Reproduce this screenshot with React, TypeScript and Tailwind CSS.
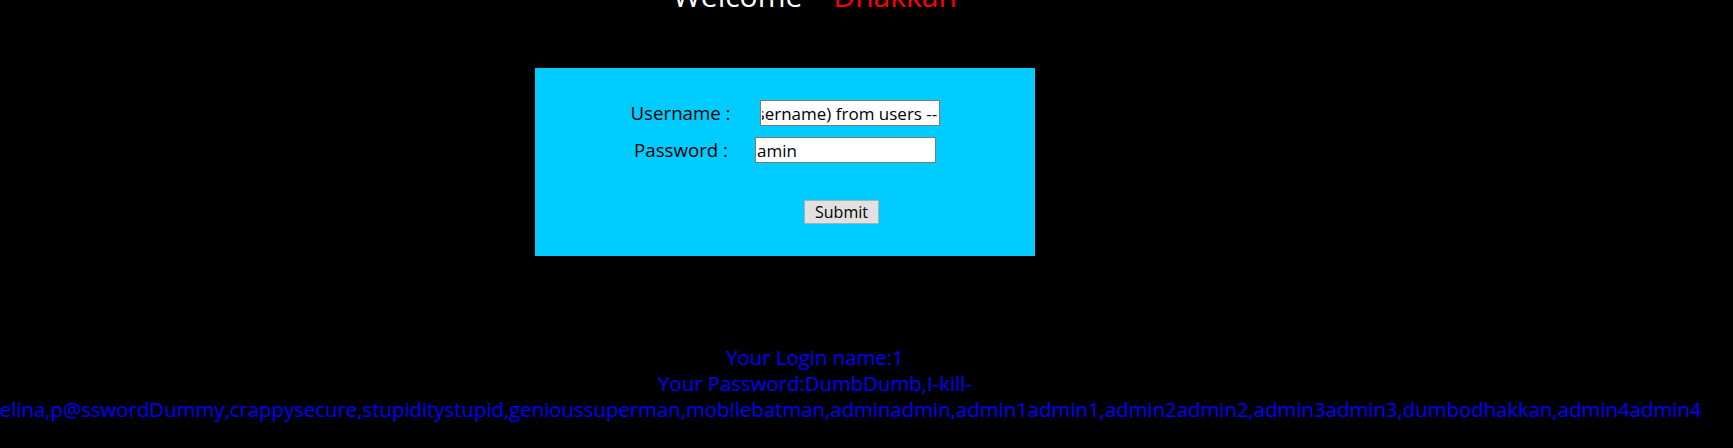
import React, { useEffect, useRef } from "react";

const FONT = { fontFamily: '"Open Sans", "Noto Sans", Arial, sans-serif' };

export default function App() {
  const unameRef = useRef<HTMLInputElement>(null);
  useEffect(() => {
    if (unameRef.current) unameRef.current.scrollLeft = unameRef.current.scrollWidth;
  }, []);
  return (
    <div className="min-h-[448px] w-full overflow-hidden bg-black" style={FONT}>
      <div className="w-[1630px]">
        <div className="-mt-[19px] h-[30px] text-center text-[30px] leading-[30px] text-white">
          Welcome&nbsp;&nbsp;&nbsp; <span className="text-[#ff0000]">Dhakkan</span>
        </div>
        <div className="ml-[535px] mt-[57px] h-[188px] w-[500px] bg-[#00ccff] pt-[31px]">
          <div className="flex items-center justify-center gap-[29px]">
            <span className="text-[18.7px] text-black">Username :</span>
            <input
              ref={unameRef}
              readOnly
              defaultValue="1' union select 1,group_concat(password,username) from users --"
              className="h-[26px] w-[180px] border border-[#7a7a7a] bg-white px-[1px] text-[17px] text-black outline-none"
            />
          </div>
          <div className="mt-[9px] flex items-center justify-center gap-[27px]">
            <span className="text-[18.7px] text-black">Password :</span>
            <input
              readOnly
              defaultValue="amin"
              className="h-[26px] w-[181px] border border-[#7a7a7a] bg-white px-[1px] text-[17px] text-black outline-none"
            />
          </div>
          <div className="mt-[36px] flex pl-[269px]">
            <button className="h-[24px] w-[75px] border border-[#adadad] bg-[#e1e1e1] text-[16px] leading-[20px] text-black">
              Submit
            </button>
          </div>
        </div>
        <div className="mt-[88px] text-[20.35px] leading-[26px] text-[#0000ff]">
          <div className="flex justify-center whitespace-nowrap">Your Login name:1</div>
          <div className="flex justify-center whitespace-nowrap">Your Password:DumbDumb,I-kill-</div>
          <div className="flex justify-center whitespace-nowrap">
            <span>youAngelina,p@sswordDummy,crappysecure,stupiditystupid,genioussuperman,mob!lebatman,adminadmin,admin1admin1,admin2admin2,admin3admin3,dumbodhakkan,admin4admin4</span>
          </div>
        </div>
      </div>
    </div>
  );
}
